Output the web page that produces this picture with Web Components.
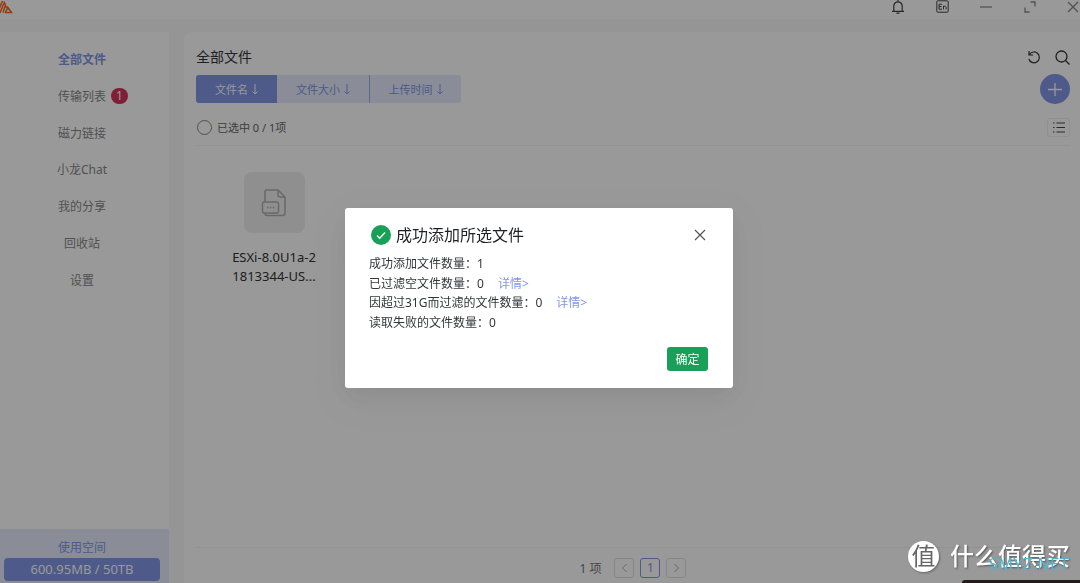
<!DOCTYPE html>
<html lang="zh-CN">
<head>
<meta charset="utf-8">
<meta name="viewport" content="width=device-width, initial-scale=1">
<title>全部文件</title>
<style>
body { margin: 0; font-family: "Noto Sans", "Noto Sans CJK SC", sans-serif; font-size: 12px; color: #333639; background: #f9f9f9; }
</style>
</head>
<body>
<drive-app></drive-app>
<script>
const base = `<style>
*, *::before { box-sizing: border-box; }
button { font: inherit; color: inherit; background: none; border: 0; padding: 0; margin: 0; display: flex; align-items: center; justify-content: center; cursor: pointer; }
a { color: inherit; text-decoration: none; }
h1, h2, p, ul, nav { margin: 0; padding: 0; }
svg { display: block; fill: none; stroke: currentColor; overflow: visible; }
</style>`;
const define = (name, html) => {
  const t = document.createElement('template');
  t.innerHTML = base + html;
  customElements.define(name, class extends HTMLElement {
    constructor() {
      super();
      this.attachShadow({ mode: 'open' }).append(t.content.cloneNode(true));
    }
  });
};

define('title-bar', `<style>
:host { display: flex; justify-content: space-between; align-items: flex-start; height: 19px; flex: none; background: #fff; color: #555; overflow: hidden; }
.tools { display: flex; gap: 28px; height: 13px; align-items: center; }
.tools button { width: 16px; height: 13px; }
.tools .close { width: 14px; }
.dark { color: #444; }
.light { color: #888; }
</style>
<svg width="13" height="14" viewBox="0 0 13 14" style="stroke:#ff5c1c;stroke-width:1.5" aria-hidden="true">
<path d="M-1 9 2.500 1M0 13 4.500 1.500M4 1.500 5.500 5 3 12.500M5.500 7h2l4 5.500H5.500L7 9h1.500"/></svg>
<div class="tools">
<button class="dark" aria-label="通知"><svg width="12" height="14" viewBox="0 0 12 14" stroke-width="1.2"><path d="M6 0v1.500M1.800 11V6a4.200 4.200 0 0 1 8.400 0v5M0 11.400h12M4.500 13.200h3"/></svg></button>
<button class="dark" aria-label="语言"><svg width="13" height="13" viewBox="0 0 13 13" stroke-width="1"><rect x=".8" y=".8" width="11.4" height="11.4" rx="1"/><path d="M6 4.2H3v5h3M3 6.6h2.600M7.500 9.400V5.800M7.500 7q1-1.200 2-.7.600.2.600 1v2.100" /></svg></button>
<button class="light" aria-label="最小化"><svg width="12" height="12" viewBox="0 0 12 12" stroke-width="1.3"><path d="M0 6h12"/></svg></button>
<button class="light" aria-label="最大化"><svg width="12" height="12" viewBox="0 0 12 12" stroke-width="1.3"><path d="M6.5 1H11v4.5M1 6.5V11h4.5"/></svg></button>
<button class="close light" aria-label="关闭窗口"><svg width="10" height="10" viewBox="0 0 10 10" stroke-width="1.3"><path d="m0 0 10 10M10 0 0 10"/></svg></button>
</div>`);

define('nav-item', `<style>
:host { display: flex; align-items: center; justify-content: center; color: #888; }
:host([active]) { color: #8096e6; font-weight: 700; }
a { position: relative; line-height: 18px; }
::slotted(span) { position: absolute; left: calc(100% + 5px); top: 0; width: 17px; height: 16px; border-radius: 8px; background: #d4325a; color: #fff; font-size: 12px; line-height: 16px; text-align: center; }
</style><a href="#"><slot></slot><slot name="badge"></slot></a>`);

define('storage-meter', `<style>
:host { display: block; background: #e6ebfc; color: #8096e6; padding: 9px 9px 2px 4px; text-align: center; line-height: 20px; }
.bar { background: #8096e6; color: #fff; border-radius: 4px; height: 23px; line-height: 23px; font-size: 13px; }
</style><p>使用空间</p><div class="bar"><slot></slot></div>`);

define('side-bar', `<style>
:host { display: flex; flex-direction: column; justify-content: space-between; background: #fff; padding-top: 10px; }
nav { display: grid; grid-auto-rows: 1fr; height: 257px; padding-right: 5px; }
</style>
<nav aria-label="主导航">
<nav-item active>全部文件</nav-item>
<nav-item>传输列表<span slot="badge">1</span></nav-item>
<nav-item>磁力链接</nav-item>
<nav-item>小龙Chat</nav-item>
<nav-item>我的分享</nav-item>
<nav-item>回收站</nav-item>
<nav-item>设置</nav-item>
</nav>
<storage-meter>600.95MB / 50TB</storage-meter>`);

define('sort-tabs', `<style>
:host { display: flex; height: 28px; border-radius: 3px; overflow: hidden; font-size: 11px; color: #8096e6; background: #e6ebfc; }
button { width: 92px; gap: 4px; }
button:first-of-type { width: 81px; background: #8096e6; color: #fff; }
button:last-of-type { border-left: 1px solid #9dafec; }
</style>
<button>文件名<svg width="6" height="11" viewBox="0 0 6 11"><path d="M3 0v10M.5 7.5 3 10l2.500-2.500"/></svg></button>
<button>文件大小<svg width="6" height="11" viewBox="0 0 6 11"><path d="M3 0v10M.5 7.5 3 10l2.500-2.500"/></svg></button>
<button>上传时间<svg width="6" height="11" viewBox="0 0 6 11"><path d="M3 0v10M.5 7.5 3 10l2.500-2.500"/></svg></button>`);

define('file-card', `<style>
:host { display: flex; flex-direction: column; align-items: center; gap: 15px; width: 96px; text-align: center; font-size: 13px; line-height: 19px; color: #333; }
.tile { width: 61px; height: 61px; border-radius: 8px; background: #eeeeee; color: #b0b0b0; display: grid; place-items: center; }
</style>
<div class="tile"><svg width="24" height="28" viewBox="0 0 24 28" stroke-width="1.5"><path d="M3 13V3a2 2 0 0 1 2-2h11l7 7v16a2.500 2.500 0 0 1-2.500 2.500H5a2 2 0 0 1-2-2M16 1v5a2 2 0 0 0 2 2h5" /><rect x=".5" y="13" width="16" height="11" rx="1.500"/><path d="M5 18.500h1.500M7.800 18.500h1.500M10.700 18.500h1.500"/></svg></div>
<div><slot></slot></div>`);

define('page-nav', `<style>
:host { display: flex; align-items: center; justify-content: center; height: 36px; padding-top: 4px; gap: 6px; border-top: 1px solid #f3f3f3; color: #777; }
.total { margin-right: 7px; }
button { width: 20px; height: 20px; border: 1px solid #e0e0e0; border-radius: 3px; color: #aaa; }
.current { border-color: #8096e6; color: #8096e6; }
</style>
<span class="total">1 项</span>
<button aria-label="上一页"><svg width="5" height="8" viewBox="0 0 5 8"><path d="M4.500 0 .5 4l4 4"/></svg></button>
<button class="current" aria-current="page">1</button>
<button aria-label="下一页"><svg width="5" height="8" viewBox="0 0 5 8"><path d="m.5 0 4 4-4 4"/></svg></button>`);

define('file-panel', `<style>
:host { display: flex; flex-direction: column; background: #fff; border-radius: 8px 0 0 0; padding: 13px 10px 0 12px; }
.row { display: flex; align-items: center; justify-content: space-between; }
h1 { font-size: 14px; font-weight: 400; line-height: 24px; }
.actions { display: flex; gap: 14px; color: #333; }
.sort { height: 40px; }
.add { width: 30px; height: 30px; border-radius: 50%; background: #8096e6; color: #fff; }
.pick { height: 37px; border-bottom: 1px solid #f3f3f3; color: #666; font-size: 11px; }
label { display: flex; align-items: center; gap: 5px; padding-left: 1px; }
input { appearance: none; width: 15px; height: 15px; margin: 0; border: 1px solid #888; border-radius: 50%; }
.view { width: 23px; height: 19px; border: 1px solid #eee; border-radius: 3px; color: #444; }
.files { flex: 1; padding: 26px 30px; }
</style>
<div class="row"><h1>全部文件</h1><div class="actions">
<button aria-label="刷新"><svg width="14" height="14" viewBox="0 0 14 14" stroke-width="1.2"><path d="M2 1v4h4M2.300 4.600A5.400 5.400 0 1 1 1.800 9"/></svg></button>
<button aria-label="搜索"><svg width="15" height="15" viewBox="0 0 15 15" stroke-width="1.3"><circle cx="6.500" cy="6.500" r="5.500"/><path d="m10.500 10.500 4 4"/></svg></button>
</div></div>
<div class="row sort"><sort-tabs></sort-tabs><button class="add" aria-label="添加"><svg width="14" height="14" viewBox="0 0 14 14" stroke-width="1.300"><path d="M7 1v13M0 7.500h14"/></svg></button></div>
<div class="row pick"><label><input type="checkbox">已选中 0 / 1项</label>
<button class="view" aria-label="列表视图"><svg width="12" height="11" viewBox="0 0 12 11" stroke-width="1.200"><path d="M3.500 1H12M3.500 5.500H12M3.500 10H12M0 1h1.500M0 5.500h1.500M0 10h1.500"/></svg></button></div>
<div class="files"><file-card>ESXi-8.0U1a-2<br>1813344-US...</file-card></div>
<page-nav></page-nav>`);

define('result-dialog', `<style>
:host { display: flex; flex-direction: column; width: 388px; background: #fff; border-radius: 3px; padding: 16px 25px 17px 24px; box-shadow: 0 6px 16px -9px rgba(0,0,0,.08), 0 9px 28px 0 rgba(0,0,0,.05), 0 12px 48px 16px rgba(0,0,0,.03); }
header { display: flex; align-items: center; gap: 5px; padding: 0 2px; height: 22px; }
h2 { font-size: 16px; font-weight: 400; line-height: 22px; color: #1f2225; flex: 1; }
.close { width: 12px; height: 22px; color: #555; }
ul { list-style: none; display: grid; grid-auto-rows: 1fr; align-items: center; height: 79px; margin-top: 8px; line-height: 19px; }
a { color: #8096e6; margin-left: 14px; }
.ok { align-self: flex-end; width: 41px; height: 24px; margin-top: 14px; background: #18a058; color: #fff; border-radius: 3px; }
</style>
<header><svg width="20" height="20" viewBox="0 0 20 20" aria-hidden="true"><circle cx="10" cy="10" r="10" fill="#18a058" stroke="none"/><path d="m6 10.500 2.700 2.700 5.300-5.700" stroke="#fff" stroke-width="1.300"/></svg>
<h2>成功添加所选文件</h2>
<button class="close" aria-label="关闭"><svg width="10" height="10" viewBox="0 0 10 10" stroke-width="1.200"><path d="m0 0 10 10M10 0 0 10"/></svg></button></header>
<ul><li>成功添加文件数量：1</li>
<li>已过滤空文件数量：0<a href="#">详情&gt;</a></li>
<li>因超过31G而过滤的文件数量：0<a href="#">详情&gt;</a></li>
<li>读取失败的文件数量：0</li></ul>
<button class="ok">确定</button>`);

define('site-mark', `<style>
:host { display: flex; align-items: center; gap: 11px; color: #fff; font-size: 24px; line-height: 32px; }
.disc { width: 31px; height: 31px; border-radius: 50%; background: #fff; color: #666; text-align: center; line-height: 30px; box-shadow: 1px 1px 2px #666; }
.name { position: relative; font-weight: 500; text-shadow: 1px 1px 2px #555; }
.url { position: absolute; right: 1px; top: 14px; color: #50b4cc; font-size: 17px; line-height: 20px; font-weight: 400; text-shadow: none; }
</style>
<span class="disc">值</span><span class="name">什么值得买<span class="url">SMYZ.NET</span></span>`);

define('drive-app', `<style>
:host { display: flex; flex-direction: column; min-height: 100vh; }
.body { flex: 1; display: grid; grid-template-columns: 169px 1fr; column-gap: 15px; padding-top: 13px; }
.mask { position: fixed; inset: 0; background: rgba(0,0,0,.4); display: flex; align-items: center; justify-content: center; padding: 12px 2px 0 0; }
site-mark { position: fixed; right: 10px; bottom: 11px; }
.edge { position: fixed; right: 0; bottom: 0; width: 118px; height: 3px; background: #231a1b; border-top-left-radius: 3px; }
</style>
<title-bar></title-bar>
<div class="body"><side-bar></side-bar><file-panel></file-panel></div>
<div class="mask"><result-dialog role="dialog" aria-modal="true"></result-dialog></div>
<div class="edge"></div>
<site-mark></site-mark>`);
</script>
</body>
</html>
